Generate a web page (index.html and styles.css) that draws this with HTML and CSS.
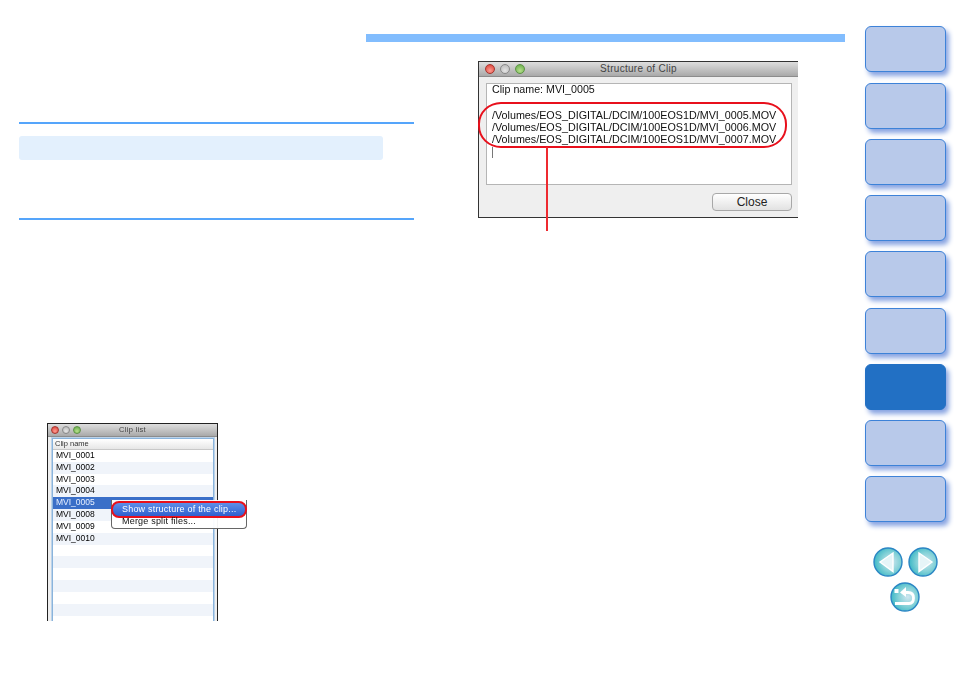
FILE: index.html
```html
<!DOCTYPE html>
<html lang="en">
<head>
    <meta charset="UTF-8">
    <meta name="viewport" content="width=device-width, initial-scale=1.0">
    <title>Structure of Clip</title>
    <link rel="stylesheet" href="styles.css">
</head>
<body>

<div class="page">
    <!-- Left column -->
    <div class="left-col">
        <div class="rule"></div>
        <div class="note-pill"></div>
        <div class="rule rule-second"></div>

        <div class="clip-list-wrap">
            <div class="mac-win clip-list">
                <div class="titlebar small-bar">
                    <span class="light red"></span>
                    <span class="light grey"></span>
                    <span class="light green"></span>
                    <span class="title">Clip list</span>
                </div>
                <div class="list-frame">
                    <div class="list-head">Clip name</div>
                    <div class="list-row">MVI_0001</div>
                    <div class="list-row">MVI_0002</div>
                    <div class="list-row">MVI_0003</div>
                    <div class="list-row">MVI_0004</div>
                    <div class="list-row selected">MVI_0005</div>
                    <div class="list-row">MVI_0008</div>
                    <div class="list-row">MVI_0009</div>
                    <div class="list-row">MVI_0010</div>
                    <div class="list-row"></div>
                    <div class="list-row"></div>
                    <div class="list-row"></div>
                    <div class="list-row"></div>
                    <div class="list-row"></div>
                    <div class="list-row"></div>
                    <div class="list-row"></div>
                </div>
            </div>
            <!-- Context menu -->
            <div class="context-menu">
                <div class="menu-item active">Show structure of the clip...</div>
                <div class="menu-item">Merge split files...</div>
            </div>
        </div>
    </div>

    <!-- Right column -->
    <div class="right-col">
        <div class="band"></div>
        <div class="mac-win structure">
            <div class="titlebar">
                <span class="light red"></span>
                <span class="light grey"></span>
                <span class="light green"></span>
                <span class="title">Structure of Clip</span>
            </div>
            <div class="win-body">
                <div class="text-box">
                    <div class="clip-name">Clip name: MVI_0005</div>
                    <div class="path-list">
                        <div>/Volumes/EOS_DIGITAL/DCIM/100EOS1D/MVI_0005.MOV</div>
                        <div>/Volumes/EOS_DIGITAL/DCIM/100EOS1D/MVI_0006.MOV</div>
                        <div>/Volumes/EOS_DIGITAL/DCIM/100EOS1D/MVI_0007.MOV</div>
                    </div>
                    <div class="caret"></div>
                </div>
                <div class="win-actions">
                    <button class="close-btn">Close</button>
                </div>
            </div>
            <div class="callout-ring"></div>
            <div class="callout-line"></div>
        </div>
    </div>

    <!-- Side navigation -->
    <div class="side-nav">
        <a class="nav-tab"></a>
        <a class="nav-tab"></a>
        <a class="nav-tab"></a>
        <a class="nav-tab"></a>
        <a class="nav-tab"></a>
        <a class="nav-tab"></a>
        <a class="nav-tab current"></a>
        <a class="nav-tab"></a>
        <a class="nav-tab"></a>

        <div class="arrows">
            <svg class="round-btn" viewBox="0 0 30 30">
                <defs>
                    <radialGradient id="teal" cx="0.6" cy="0.5" r="0.6">
                        <stop offset="0" stop-color="#cfe6f0"/>
                        <stop offset="0.55" stop-color="#86d2d8"/>
                        <stop offset="1" stop-color="#3db8c6"/>
                    </radialGradient>
                </defs>
                <circle cx="15" cy="15" r="14" fill="url(#teal)" stroke="#2b86c4" stroke-width="1.4"/>
                <path d="M7 15 L20 6 V24.5 Z" fill="#e6f5f8" stroke="#fff" stroke-width="1.4"/>
            </svg>
            <svg class="round-btn" viewBox="0 0 30 30">
                <circle cx="15" cy="15" r="14" fill="url(#teal)" stroke="#2b86c4" stroke-width="1.4"/>
                <path d="M24 15 L11 6 V24.5 Z" fill="#e6f5f8" stroke="#fff" stroke-width="1.4"/>
            </svg>
        </div>
        <svg class="round-btn back-btn" viewBox="0 0 30 30">
            <circle cx="15" cy="15" r="14" fill="url(#teal)" stroke="#2b86c4" stroke-width="1.4"/>
            <path d="M5 21.5 H19 Q23.5 21.5 23.5 16 Q23.5 10.5 18 10.5 H15" fill="none" stroke="#fff" stroke-width="2.8"/>
            <path d="M16 5 L10 10.5 L16 15 Z" fill="#fff"/>
            <rect x="4.5" y="7" width="4" height="4" fill="#fff"/>
        </svg>
    </div>
</div>

</body>
</html>
```

FILE: styles.css
```css
html, body {
    margin: 0;
    padding: 0;
    background: #fff;
    height: 674px;
    overflow: hidden;
}
body {
    font-family: "Liberation Sans", Arial, sans-serif;
    color: #111;
}
.page {
    display: grid;
    grid-template-columns: 347px 48px 431px 101px;
    padding-left: 19px;
}

/* left column */
.left-col {
    grid-column: 1 / 3;
    grid-row: 1;
    padding-top: 122px;
}
.rule {
    height: 2px;
    background: #55a5fb;
}
.rule-second {
    margin-top: 58px;
}
.note-pill {
    width: 364px;
    height: 24px;
    margin-top: 12px;
    background: #e3f0fd;
    border-radius: 3px;
}
.clip-list-wrap {
    position: relative;
    margin: 203px 0 0 28px;
}

/* mac style windows */
.mac-win {
    box-sizing: border-box;
    background: #efefef;
    border: 1px solid #222;
}
.titlebar {
    display: flex;
    align-items: center;
    position: relative;
    height: 14px;
    padding-left: 6px;
    gap: 5px;
    background: linear-gradient(#dedede, #a9a9a9);
    border-bottom: 1px solid #8c8c8c;
}
.light {
    width: 10px;
    height: 10px;
    border-radius: 50%;
    border: 1px solid #888;
    box-sizing: border-box;
}
.red { background: radial-gradient(circle at 50% 70%, #ff9c92, #d8392f); border-color: #a5352e; }
.grey { background: radial-gradient(circle at 50% 70%, #e4e4e4, #b5b5b5); }
.green { background: radial-gradient(circle at 50% 70%, #b6e08c, #62a845); border-color: #5d9345; }
.title {
    position: absolute;
    left: 0;
    right: 0;
    top: 0;
    line-height: 13px;
    text-align: center;
    font-size: 10px;
    color: #444;
    letter-spacing: 0.3px;
}

/* clip list window */
.clip-list {
    width: 171px;
    height: 198px;
    overflow: hidden;
    border-bottom: none;
    filter: blur(0.3px);
}
.small-bar {
    height: 12px;
    gap: 3px;
    padding-left: 3px;
}
.small-bar .light {
    width: 8px;
    height: 8px;
}
.small-bar .title {
    font-size: 7.5px;
    line-height: 12px;
}
.list-frame {
    margin: 1px 3px 0 4px;
    background: #fff;
    border: 1px solid #8ab4dc;
    box-shadow: 0 0 0 1px #bcd3ea;
}
.list-head {
    height: 10px;
    line-height: 10px;
    padding-left: 2px;
    font-size: 7.5px;
    color: #333;
    background: linear-gradient(#fff, #e6e6e6);
    border-bottom: 1px solid #c8c8c8;
}
.list-row {
    box-sizing: border-box;
    height: 11.83px;
    line-height: 11.83px;
    padding-left: 3px;
    font-size: 8.5px;
    color: #000;
}
.list-row:nth-child(odd) {
    background: #f0f4fa;
}
.list-row.selected {
    background: #3a6fc8;
    color: #e8f0ff;
}
.context-menu {
    position: absolute;
    left: 64px;
    top: 77px;
    width: 136px;
    height: 29px;
    box-sizing: border-box;
    background: rgba(255, 255, 255, 0.95);
    border: 1px solid #666;
    border-top: none;
    border-radius: 0 0 4px 4px;
    font-size: 9px;
    letter-spacing: 0.2px;
    filter: blur(0.3px);
}
.menu-item {
    height: 12px;
    line-height: 12px;
    padding-left: 10px;
}
.menu-item.active {
    box-sizing: border-box;
    height: 17px;
    line-height: 13px;
    margin: 1px -1px -3px -1px;
    color: #fff;
    background: linear-gradient(#5f8fe8, #2f5fd0);
    border: 2px solid #e8101c;
    border-radius: 8px;
    padding-left: 9px;
}

/* right column */
.right-col {
    grid-column: 2 / 4;
    grid-row: 1;
    padding-top: 34px;
}
.band {
    height: 8px;
    background: #82bdfe;
}
.structure {
    position: relative;
    width: 320px;
    height: 157px;
    margin: 19px 0 0 112px;
    border-right: none;
    border-color: #333;
}
.win-body {
    padding: 6px 6px 0 7px;
}
.text-box {
    box-sizing: border-box;
    height: 102px;
    padding: 0 5px;
    background: #fff;
    border: 1px solid #b5b5b5;
    font-size: 10.7px;
    filter: blur(0.3px);
}
.clip-name {
    line-height: 11px;
}
.path-list {
    margin-top: 14px;
    line-height: 12px;
    font-size: 10.75px;
}
.caret {
    width: 1px;
    height: 11px;
    margin-top: 2px;
    background: #777;
}
.win-actions {
    display: flex;
    justify-content: flex-end;
    margin-top: 8px;
}
.close-btn {
    width: 80px;
    height: 18px;
    padding: 0;
    background: linear-gradient(#fff, #e2e2e2);
    border: 1px solid #a8a8a8;
    border-radius: 4px;
    font-family: "Liberation Sans", Arial, sans-serif;
    font-size: 12px;
    color: #222;
}
.callout-ring {
    position: absolute;
    left: -1px;
    top: 40px;
    width: 309px;
    height: 46px;
    box-sizing: border-box;
    border: 2px solid #e8101c;
    border-radius: 23px / 22px;
}
.callout-line {
    position: absolute;
    left: 67px;
    top: 85px;
    width: 2px;
    height: 84px;
    background: #ee2a30;
}

/* side nav */
.side-nav {
    grid-column: 4;
    grid-row: 1;
    display: flex;
    flex-direction: column;
    gap: 10.25px;
    padding: 26.4px 0 0 20px;
}
.nav-tab {
    display: block;
    box-sizing: border-box;
    width: 81px;
    height: 46px;
    background: #b8c9ea;
    border: 1.5px solid #3d82d8;
    border-radius: 6px;
    box-shadow: 3px 4px 5px #88a4e2;
}
.nav-tab.current {
    background: #2270c4;
    border-color: #2270c4;
}
.arrows {
    display: flex;
    gap: 5px;
    margin: 14.5px 0 0 8px;
}
.round-btn {
    display: block;
    width: 30px;
    height: 30px;
}
.back-btn {
    margin: -5px 0 0 25px;
}
```
